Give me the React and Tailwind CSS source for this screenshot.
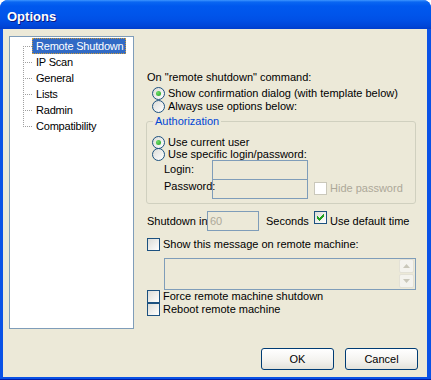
import React from "react";

function Radio({ checked }) {
  return (
    <span className="flex h-[13px] w-[13px] shrink-0 items-center justify-center rounded-full border border-[#1c5180] bg-[linear-gradient(135deg,#dcdcd7,#ffffff)]">
      {checked && (
        <span className="h-[5px] w-[5px] rounded-full bg-[radial-gradient(circle_at_35%_35%,#6fdc6a,#21a121)]" />
      )}
    </span>
  );
}

function Check({ checked, disabled }) {
  return (
    <span
      className={
        disabled
          ? "flex h-[13px] w-[13px] shrink-0 items-center justify-center border border-[#cac8bb] bg-white"
          : "flex h-[13px] w-[13px] shrink-0 items-center justify-center border border-[#1c5180] bg-[linear-gradient(135deg,#dcdcd7,#ffffff)]"
      }
    >
      {checked && (
        <svg width="7" height="7" viewBox="0 0 7 7" shapeRendering="crispEdges">
          <polygon points="0,2 2,4 7,-1 7,2 2,7 0,5" fill="#21a121" />
        </svg>
      )}
    </span>
  );
}

function TreeItem({ label, first, last, selected }) {
  return (
    <div className="flex h-[16px] items-center pl-[13px]">
      <svg width="9" height="16" viewBox="0 0 9 16" shapeRendering="crispEdges">
        <line
          x1="0.5"
          y1={first ? 8 : 0}
          x2="0.5"
          y2={last ? 9 : 16}
          stroke="#a0a0a0"
          strokeDasharray="1 1"
        />
        <line x1="1" y1="8.5" x2="9" y2="8.5" stroke="#a0a0a0" strokeDasharray="1 1" strokeDashoffset="1" />
      </svg>
      <span
        className={
          selected
            ? "flex h-[16px] items-center border border-dotted border-[#c99a3c] bg-[#316ac5] pl-[3px] pr-[1px] tracking-[-0.2px] text-white"
            : "flex h-[16px] items-center border border-transparent pl-[3px] pr-[1px] tracking-[-0.2px]"
        }
      >
        {label}
      </span>
    </div>
  );
}

function ScrollBtn({ down }) {
  return (
    <span className="flex h-[14px] w-[15px] items-center justify-center rounded-[2px] border border-[#e3e1d6] bg-[#f4f3ee]">
      <svg width="7" height="4" viewBox="0 0 7 4">
        <polygon points={down ? "0,0 7,0 3.5,4" : "0,4 7,4 3.5,0"} fill="#c9c7ba" />
      </svg>
    </span>
  );
}

export default function App() {
  const tree = ["Remote Shutdown", "IP Scan", "General", "Lists", "Radmin", "Compatibility"];

  return (
    <div className="h-[380px] w-[431px] bg-white font-['Liberation_Sans',Arial,sans-serif] text-[11px] leading-[13px] text-black">
      <div className="flex h-full flex-col overflow-hidden rounded-t-[8px] bg-[#0a52e6]">
        <div className="flex h-[29px] shrink-0 items-center bg-[linear-gradient(#3d95ff_0px,#0a66f2_2px,#0058ee_6px,#0055eb_14px,#0050e6_20px,#0046d8_26px,#003dcc_29px)] pl-[7px] pt-[3px] text-[13px] font-bold leading-[15px] text-white [text-shadow:1px_1px_0_#0a1883]">
          Options
        </div>

        <div className="flex flex-1 border-b-[1px] border-[#001ea8] pb-[2px] pl-[3px] pr-[4px]">
          <div className="flex flex-1 flex-col bg-[#ece9d8] pl-[6px] pr-[9px] pt-[7px]">
            <div className="flex">
              <div className="h-[293px] w-[125px] shrink-0 border border-[#7f9db9] bg-white pt-[1px]">
                {tree.map((t, i) => (
                  <TreeItem
                    key={t}
                    label={t}
                    first={i === 0}
                    last={i === tree.length - 1}
                    selected={i === 0}
                  />
                ))}
              </div>

              <div className="ml-[12px] flex w-[270px] flex-col">
                <div className="mt-[35px] h-[13px] pl-[1px]">On "remote shutdown" command:</div>
                <div className="mt-[3px] flex h-[13px] items-center gap-[3px] pl-[6px]">
                  <Radio checked />
                  Show confirmation dialog (with template below)
                </div>
                <div className="flex h-[13px] items-center gap-[3px] pl-[6px]">
                  <Radio />
                  Always use options below:
                </div>

                <fieldset className="mt-[2px] rounded-[3px] border border-[#d0d0bf] pb-[4px]">
                  <legend className="ml-[6px] h-[13px] px-[2px] leading-[13px] text-[#0046d5]">
                    Authorization
                  </legend>
                  <div className="mt-[8px] flex h-[12px] items-center gap-[3px] pl-[5px]">
                    <Radio checked />
                    Use current user
                  </div>
                  <div className="flex h-[12px] items-center gap-[3px] pl-[5px]">
                    <Radio />
                    Use specific login/password:
                  </div>
                  <div className="flex h-[20px] pl-[17px]">
                    <span className="mt-[3px] w-[48px]">Login:</span>
                    <span className="h-[20px] w-[96px] border border-[#7f9db9]" />
                  </div>
                  <div className="-mt-[1px] flex h-[20px] pl-[17px]">
                    <span className="mt-[1px] w-[48px] whitespace-nowrap">Password:</span>
                    <span className="h-[20px] w-[96px] border border-[#7f9db9]" />
                    <span className="ml-[6px] mt-[3px] flex h-[13px] items-center gap-[3px] text-[#aca899]">
                      <Check disabled />
                      Hide password
                    </span>
                  </div>
                </fieldset>

                <div className="mt-[7px] flex h-[20px] items-center pl-[1px]">
                  <span className="w-[60px] whitespace-nowrap">Shutdown in</span>
                  <span className="flex h-[20px] w-[52px] items-center border border-[#7f9db9] pl-[2px] text-[#aca899]">
                    60
                  </span>
                  <span className="ml-[7px] w-[48px]">Seconds</span>
                  <span className="flex h-[20px] items-start gap-[3px]">
                    <Check checked />
                    <span className="mt-[4px]">Use default time</span>
                  </span>
                </div>

                <div className="mt-[7px] flex h-[13px] items-center gap-[3px] pl-[1px]">
                  <Check />
                  Show this message on remote machine:
                </div>

                <div className="ml-[18px] mt-[7px] flex h-[32px] w-[252px] justify-end border border-[#7f9db9] pr-[1px]">
                  <div className="flex flex-col gap-[1px]">
                    <ScrollBtn />
                    <ScrollBtn down />
                  </div>
                </div>

                <div className="flex h-[13px] items-center gap-[3px] pl-[1px]">
                  <Check />
                  Force remote machine shutdown
                </div>
                <div className="flex h-[13px] items-center gap-[3px] pl-[1px]">
                  <Check />
                  Reboot remote machine
                </div>
              </div>
            </div>

            <div className="mt-[19px] flex justify-end gap-[11px]">
              <button className="h-[22px] w-[73px] rounded-[3px] border border-[#003c74] bg-[linear-gradient(#ffffff,#f3f2ee_60%,#e3e2da)] text-[11px]">
                OK
              </button>
              <button className="h-[22px] w-[73px] rounded-[3px] border border-[#003c74] bg-[linear-gradient(#ffffff,#f3f2ee_60%,#e3e2da)] text-[11px]">
                Cancel
              </button>
            </div>
          </div>
        </div>
      </div>
    </div>
  );
}
